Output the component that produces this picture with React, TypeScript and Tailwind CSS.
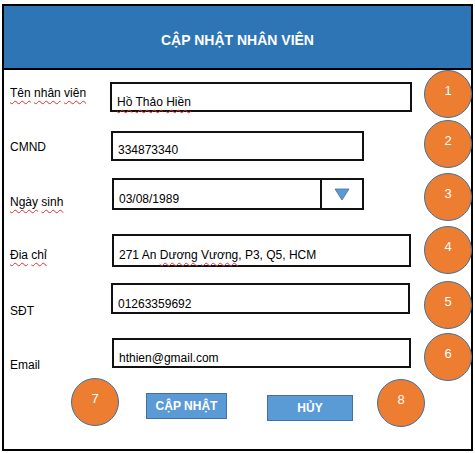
const font = { fontFamily: '"Liberation Sans", Arial, sans-serif' };

const Marker = ({ n, pos }: { n: number; pos: string }) => (
  <div
    className={`absolute ${pos} w-[48px] h-[48px] rounded-full bg-[#ED7D31] border border-[#41719C] flex items-center justify-center pb-[6px] text-[13px] text-white`}
  >
    {n}
  </div>
);

const Squiggle = ({ children }: { children: React.ReactNode }) => (
  <span className="underline decoration-wavy decoration-[#e03030] decoration-1 underline-offset-[3px]">
    {children}
  </span>
);

export default function App() {
  return (
    <div className="w-[475px] h-[453px] bg-white pt-[4px] pl-[2px] text-black" style={font}>
      <div className="relative w-[471px] h-[447px] border-2 border-black">
        <div className="h-[64px] bg-[#2E75B6] border-b-2 border-black flex items-center justify-center pt-[7px] text-[14px] font-bold text-white">
          CẬP NHẬT NHÂN VIÊN
        </div>

        <div className="flex flex-col text-[12px] leading-[14px]">
          {/* Tên nhân viên */}
          <div className="flex mt-[12px] h-[30px]">
            <div className="w-[106px] pl-[6px] pt-[4px]">
              <Squiggle>Tên</Squiggle> <Squiggle>nhân</Squiggle> <Squiggle>viên</Squiggle>
            </div>
            <div className="w-[302px] h-[30px] border-2 border-[#111] flex items-end pl-[5px] pb-[1px]">
              <span>
                <Squiggle>Hồ</Squiggle> <Squiggle>Thảo</Squiggle> <Squiggle>Hiền</Squiggle>
              </span>
            </div>
          </div>

          {/* CMND */}
          <div className="flex mt-[19px] h-[30px]">
            <div className="w-[107px] pl-[6px] pt-[9px]">CMND</div>
            <div className="w-[253px] h-[30px] border-2 border-[#111] flex items-end pl-[5px] pb-[2px]">
              334873340
            </div>
          </div>

          {/* Ngày sinh */}
          <div className="flex mt-[17px] h-[32px]">
            <div className="w-[108px] pl-[6px] pt-[17px]">
              <Squiggle>Ngày</Squiggle> <Squiggle>sinh</Squiggle>
            </div>
            <div className="w-[252px] h-[32px] border-2 border-[#111] flex">
              <div className="flex-1 flex items-end pl-[5px] pb-[2px]">03/08/1989</div>
              <div className="w-[42px] border-l-2 border-[#111] flex items-center justify-center">
                <svg width="16" height="13" viewBox="0 0 16 13">
                  <path d="M1 1 L15 1 L8 12 Z" fill="#5B9BD5" stroke="#41719C" strokeWidth="0.8" />
                </svg>
              </div>
            </div>
          </div>

          {/* Địa chỉ */}
          <div className="flex mt-[24px] h-[33px]">
            <div className="w-[108px] pl-[6px] pt-[14px]">
              <Squiggle>Đia</Squiggle> <Squiggle>chỉ</Squiggle>
            </div>
            <div className="w-[299px] h-[33px] border-2 border-[#111] flex items-end pl-[5px] pb-[3px]">
              <span>
                271 An <Squiggle>Dương</Squiggle> <Squiggle>Vương</Squiggle>, P3, Q5, HCM
              </span>
            </div>
          </div>

          {/* SĐT */}
          <div className="flex mt-[16px] h-[31px]">
            <div className="w-[107px] pl-[6px] pt-[21px]">SĐT</div>
            <div className="w-[299px] h-[31px] border-2 border-[#111] flex items-end pl-[5px] pb-[1px]">
              01263359692
            </div>
          </div>

          {/* Email */}
          <div className="flex mt-[24px] h-[30px]">
            <div className="w-[108px] pl-[6px] pt-[20px]">Email</div>
            <div className="w-[299px] h-[30px] border-2 border-[#111] flex items-end pl-[5px] pb-[1px]">
              hthien@gmail.com
            </div>
          </div>

          {/* buttons */}
          <div className="flex items-start mt-[25px] pl-[142px] gap-[40px]">
            <div className="w-[81px] h-[26px] bg-[#5B9BD5] border border-[#41719C] flex items-center justify-center font-bold text-white">
              CẬP NHẬT
            </div>
            <div className="mt-[2px] w-[86px] h-[26px] bg-[#5B9BD5] border border-[#41719C] flex items-center justify-center font-bold text-white">
              HỦY
            </div>
          </div>
        </div>

        <Marker n={1} pos="left-[420px] top-[64px]" />
        <Marker n={2} pos="left-[420px] top-[114px]" />
        <Marker n={3} pos="left-[420px] top-[167px]" />
        <Marker n={4} pos="left-[420px] top-[220px]" />
        <Marker n={5} pos="left-[420px] top-[275px]" />
        <Marker n={6} pos="left-[420px] top-[327px]" />
        <Marker n={7} pos="left-[67px] top-[372px]" />
        <Marker n={8} pos="left-[373px] top-[373px]" />
      </div>
    </div>
  );
}
